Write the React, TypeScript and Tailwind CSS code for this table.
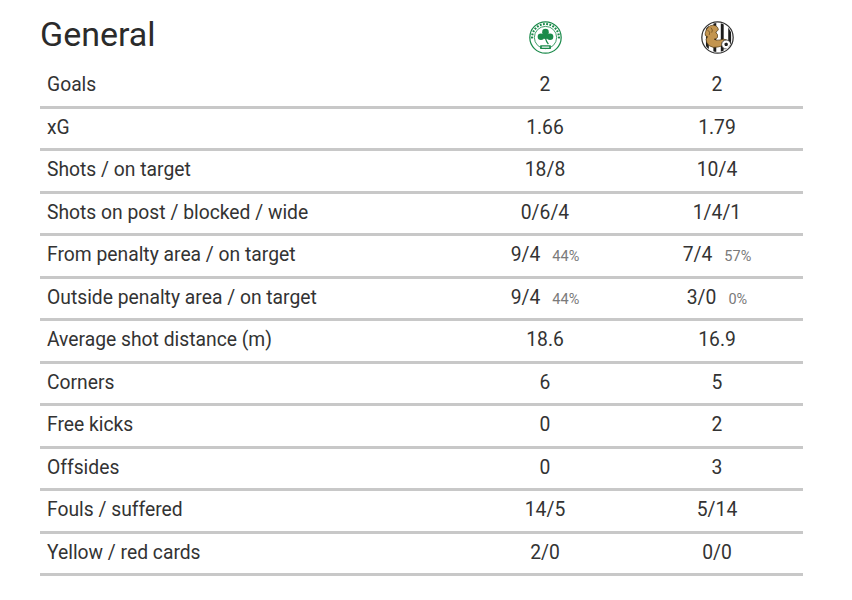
import React from "react";

type Stat = {
  label: string;
  home: string;
  away: string;
  homePct?: string;
  awayPct?: string;
};

const stats: Stat[] = [
  { label: "Goals", home: "2", away: "2" },
  { label: "xG", home: "1.66", away: "1.79" },
  { label: "Shots / on target", home: "18/8", away: "10/4" },
  { label: "Shots on post / blocked / wide", home: "0/6/4", away: "1/4/1" },
  { label: "From penalty area / on target", home: "9/4", away: "7/4", homePct: "44%", awayPct: "57%" },
  { label: "Outside penalty area / on target", home: "9/4", away: "3/0", homePct: "44%", awayPct: "0%" },
  { label: "Average shot distance (m)", home: "18.6", away: "16.9" },
  { label: "Corners", home: "6", away: "5" },
  { label: "Free kicks", home: "0", away: "2" },
  { label: "Offsides", home: "0", away: "3" },
  { label: "Fouls / suffered", home: "14/5", away: "5/14" },
  { label: "Yellow / red cards", home: "2/0", away: "0/0" },
];

function HomeLogo() {
  return (
    <svg width="33" height="33" viewBox="0 0 40 40">
      <circle cx="20" cy="20" r="19" fill="#ffffff" stroke="#1a8a4a" strokeWidth="1.5" />
      <circle cx="20" cy="20" r="13.5" fill="none" stroke="#1a8a4a" strokeWidth="1" />
      {Array.from({ length: 14 }).map((_, i) => {
        const ang = Math.PI + (i / 13) * Math.PI;
        const x = 20 + 16.3 * Math.cos(ang);
        const y = 20 + 16.3 * Math.sin(ang);
        return (
          <rect
            key={i}
            x={x - 1.1}
            y={y - 1.3}
            width="2.2"
            height="2.6"
            fill="#1a8a4a"
            transform={`rotate(${(ang * 180) / Math.PI + 90} ${x} ${y})`}
          />
        );
      })}
      <circle cx="20" cy="13.5" r="4" fill="#1a8a4a" />
      <circle cx="14.5" cy="19" r="4" fill="#1a8a4a" />
      <circle cx="25.5" cy="19" r="4" fill="#1a8a4a" />
      <circle cx="20" cy="19" r="3" fill="#1a8a4a" />
      <path d="M20 21 Q21 25 23.5 28" stroke="#1a8a4a" strokeWidth="1.6" fill="none" />
      <rect x="13.5" y="29.5" width="13" height="4.5" rx="0.5" fill="#1a8a4a" />
      <rect x="15.5" y="30.8" width="9" height="1.8" fill="#ffffff" opacity="0.8" />
    </svg>
  );
}

function AwayLogo() {
  return (
    <svg width="33" height="33" viewBox="0 0 40 40">
      <defs>
        <clipPath id="awayClip">
          <circle cx="20" cy="20" r="17.5" />
        </clipPath>
      </defs>
      <circle cx="20" cy="20" r="19" fill="#ffffff" stroke="#333333" strokeWidth="1.5" />
      <g clipPath="url(#awayClip)">
        <rect x="0" y="0" width="40" height="40" fill="#ffffff" />
        <rect x="6" y="0" width="3.5" height="40" fill="#1c1c1c" />
        <rect x="15" y="0" width="3.5" height="40" fill="#1c1c1c" />
        <rect x="24" y="0" width="3.5" height="40" fill="#1c1c1c" />
        <rect x="33" y="0" width="3.5" height="40" fill="#1c1c1c" />
        {/* lion */}
        <path
          d="M5 15 Q7 5 15 5 Q21 6 21 11 Q19 12 18 14 Q21 16 20 20 Q18 22 16 22 Q18 24 23 23 Q28 21 31 23 Q31 28 26 30 Q21 32 15 32 Q9 31 7 26 Q5 22 8 19 Q4 18 5 15 Z"
          fill="#c39550"
          stroke="#4a3210"
          strokeWidth="0.8"
        />
        <path d="M8 11 Q12 13 10 17 M12 8 Q15 11 13 14" stroke="#4a3210" strokeWidth="0.7" fill="none" />
        <circle cx="30.5" cy="28.5" r="5.5" fill="#ffffff" stroke="#1c1c1c" strokeWidth="0.9" />
        <path d="M30.5 26 L32.8 27.7 L31.9 30.3 L29.1 30.3 L28.2 27.7 Z" fill="#1c1c1c" />
      </g>
    </svg>
  );
}

function Value({ main, pct }: { main: string; pct?: string }) {
  return (
    <div className="flex items-baseline justify-center">
      <span>{main}</span>
      {pct && <span className="ml-3 text-[14.5px] text-[#7a7a7a]">{pct}</span>}
    </div>
  );
}

export default function App() {
  return (
    <div className="min-h-[600px] bg-white font-['Roboto',sans-serif] text-[#333333]">
      <div className="pl-10">
        <div className="w-[763px]">
          <div className="grid h-[66px] grid-cols-[419px_172px_172px] items-center">
            <h1 className="pt-[2px] text-[34px] leading-none text-[#2b2b2b]">General</h1>
            <div className="flex justify-center pt-[8px]">
              <HomeLogo />
            </div>
            <div className="flex justify-center pt-[8px]">
              <AwayLogo />
            </div>
          </div>
          {stats.map((s) => (
            <div
              key={s.label}
              className="box-border grid h-[42.5px] grid-cols-[419px_172px_172px] items-center border-b-[3px] border-[#c8c8c8] text-[19.3px]"
            >
              <div className="pl-[7px]">{s.label}</div>
              <Value main={s.home} pct={s.homePct} />
              <Value main={s.away} pct={s.awayPct} />
            </div>
          ))}
        </div>
      </div>
    </div>
  );
}
